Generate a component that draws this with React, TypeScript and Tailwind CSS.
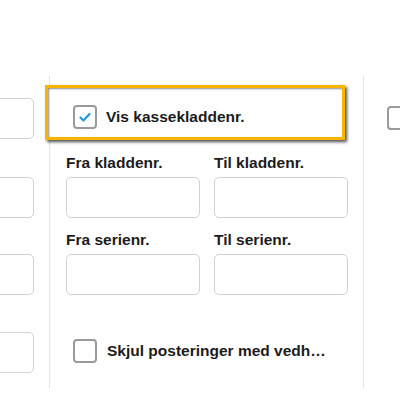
import { ReactNode } from 'react'

function CheckBox({ checked }: { checked?: boolean }) {
  return (
    <div className="w-[24px] h-[24px] shrink-0 rounded-[4px] border-2 border-[#9a9a9a] bg-white flex items-center justify-center">
      {checked && (
        <svg width="14" height="14" viewBox="0 0 14 14" fill="none">
          <path d="M2.5 7.5l3 3 6-6.5" stroke="#1f9bd7" strokeWidth="2.2" strokeLinecap="round" strokeLinejoin="round" />
        </svg>
      )}
    </div>
  )
}

function Field({ label, className = '' }: { label: string; className?: string }) {
  return (
    <div className={`flex flex-col w-[134px] ${className}`}>
      <span className="text-[15.5px] leading-[18px] font-bold text-[#1c1c1c] mb-[5px] whitespace-nowrap">{label}</span>
      <div className="h-[41px] rounded-[5px] border border-[#d2d2d2] bg-white" />
    </div>
  )
}

function Input({ className = '' }: { className?: string }) {
  return <div className={`h-[41px] w-[134px] rounded-[5px] border border-[#d2d2d2] bg-white ${className}`} />
}

function Row({ children, className = '' }: { children: ReactNode; className?: string }) {
  return <div className={`flex gap-[14px] ${className}`}>{children}</div>
}

export default function App() {
  return (
    <div
      className="w-[400px] h-[400px] overflow-hidden bg-white"
      style={{ fontFamily: '"Liberation Sans", Arial, sans-serif' }}
    >
      <div className="flex pt-[76px] h-[388px]">
        {/* left column, mostly out of view */}
        <div className="-ml-[100px] pr-[15px] flex flex-col shrink-0">
          <Input className="mt-[22px]" />
          <Input className="mt-[38px]" />
          <Input className="mt-[36px]" />
          <Input className="mt-[37px]" />
        </div>

        {/* middle column */}
        <div className="border-l border-[#e3e3e3] pl-[16px] pr-[15px] shrink-0 flex flex-col">
          <div className="-ml-[21px] mt-[9px] w-[300px] h-[55px] border-[3px] border-[#f7b500] bg-white shadow-[2px_2px_3px_rgba(0,0,0,0.7),inset_1px_1px_2px_rgba(0,0,0,0.45)] flex items-start pl-[25px] pt-[17px]">
            <CheckBox checked />
            <span className="ml-[9px] mt-[2px] text-[15.5px] leading-[20px] font-bold text-[#1c1c1c] whitespace-nowrap">Vis kassekladdenr.</span>
          </div>

          <Row className="mt-[14px]">
            <Field label="Fra kladdenr." />
            <Field label="Til kladdenr." />
          </Row>
          <Row className="mt-[13px]">
            <Field label="Fra serienr." />
            <Field label="Til serienr." />
          </Row>

          <div className="flex items-center mt-[44px] ml-[7px]">
            <CheckBox />
            <span className="ml-[10px] text-[15.5px] leading-[20px] font-bold text-[#1c1c1c] whitespace-nowrap">Skjul posteringer med vedh…</span>
          </div>
        </div>

        {/* right column */}
        <div className="border-l border-[#e3e3e3] pl-[23px] pt-[30px] shrink-0">
          <CheckBox />
        </div>
      </div>
    </div>
  )
}
